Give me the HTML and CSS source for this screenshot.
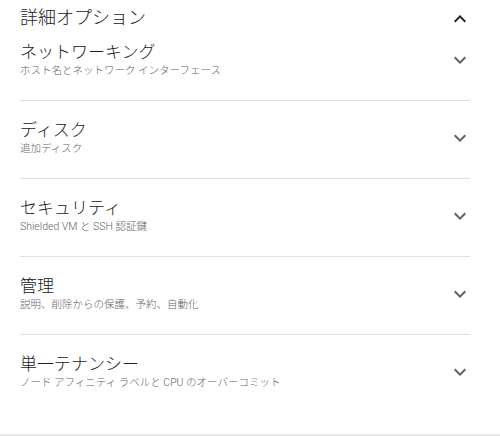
FILE: index.html
```html
<!DOCTYPE html>
<html lang="ja">
<head>
<meta charset="utf-8">
<link rel="stylesheet" href="styles.css">
</head>
<body>
<div class="panel">
  <div class="panel-header">
    <div class="panel-title">詳細オプション</div>
    <svg class="chev chev-up" viewBox="0 0 24 24" width="24" height="24"><path d="M12 8l-6 6 1.41 1.41L12 10.83l4.59 4.58L18 14z"/></svg>
  </div>
  <div class="section first">
    <div class="text">
      <div class="heading">ネットワーキング</div>
      <div class="sub">ホスト名とネットワーク インターフェース</div>
    </div>
    <svg class="chev" viewBox="0 0 24 24" width="24" height="24"><path d="M16.59 8.59L12 13.17 7.41 8.59 6 10l6 6 6-6z"/></svg>
  </div>
  <div class="section">
    <div class="text">
      <div class="heading">ディスク</div>
      <div class="sub">追加ディスク</div>
    </div>
    <svg class="chev" viewBox="0 0 24 24" width="24" height="24"><path d="M16.59 8.59L12 13.17 7.41 8.59 6 10l6 6 6-6z"/></svg>
  </div>
  <div class="section">
    <div class="text">
      <div class="heading">セキュリティ</div>
      <div class="sub">Shielded VM と SSH 認証鍵</div>
    </div>
    <svg class="chev" viewBox="0 0 24 24" width="24" height="24"><path d="M16.59 8.59L12 13.17 7.41 8.59 6 10l6 6 6-6z"/></svg>
  </div>
  <div class="section">
    <div class="text">
      <div class="heading">管理</div>
      <div class="sub">説明、削除からの保護、予約、自動化</div>
    </div>
    <svg class="chev" viewBox="0 0 24 24" width="24" height="24"><path d="M16.59 8.59L12 13.17 7.41 8.59 6 10l6 6 6-6z"/></svg>
  </div>
  <div class="section last">
    <div class="text">
      <div class="heading">単一テナンシー</div>
      <div class="sub">ノード アフィニティ ラベルと CPU のオーバーコミット</div>
    </div>
    <svg class="chev" viewBox="0 0 24 24" width="24" height="24"><path d="M16.59 8.59L12 13.17 7.41 8.59 6 10l6 6 6-6z"/></svg>
  </div>
</div>
<div class="footer"></div>
</body>
</html>
```
FILE: styles.css
```css
html, body {
  margin: 0;
  padding: 0;
  background: #ffffff;
}
body {
  font-family: Roboto, "Noto Sans CJK JP", sans-serif;
  font-weight: 300;
  color: #202124;
  width: 500px;
  height: 436px;
  overflow: hidden;
}
.panel {
  padding: 0 30px 0 20px;
}
.panel-header {
  display: flex;
  justify-content: space-between;
  align-items: flex-start;
  height: 41px;
  padding-top: 6px;
  box-sizing: border-box;
}
.panel-title {
  font-size: 18px;
  line-height: 24px;
}
.chev {
  flex: none;
  fill: #5f6368;
  margin-right: -2px;
}
.chev-up {
  fill: #202124;
  margin-top: 1px;
}
.section {
  display: flex;
  align-items: center;
  justify-content: space-between;
  padding: 18px 0 21px;
  border-bottom: 1px solid #e0e0e0;
}
.section.first {
  padding-top: 0;
}
.section.last {
  border-bottom: none;
}
.heading {
  font-size: 17px;
  line-height: 22px;
  color: #202124;
}
.sub {
  font-size: 10.5px;
  line-height: 16px;
  color: #5f6368;
}
.footer {
  margin-top: 22px;
  border-top: 2px solid #e8e8e8;
}
```
